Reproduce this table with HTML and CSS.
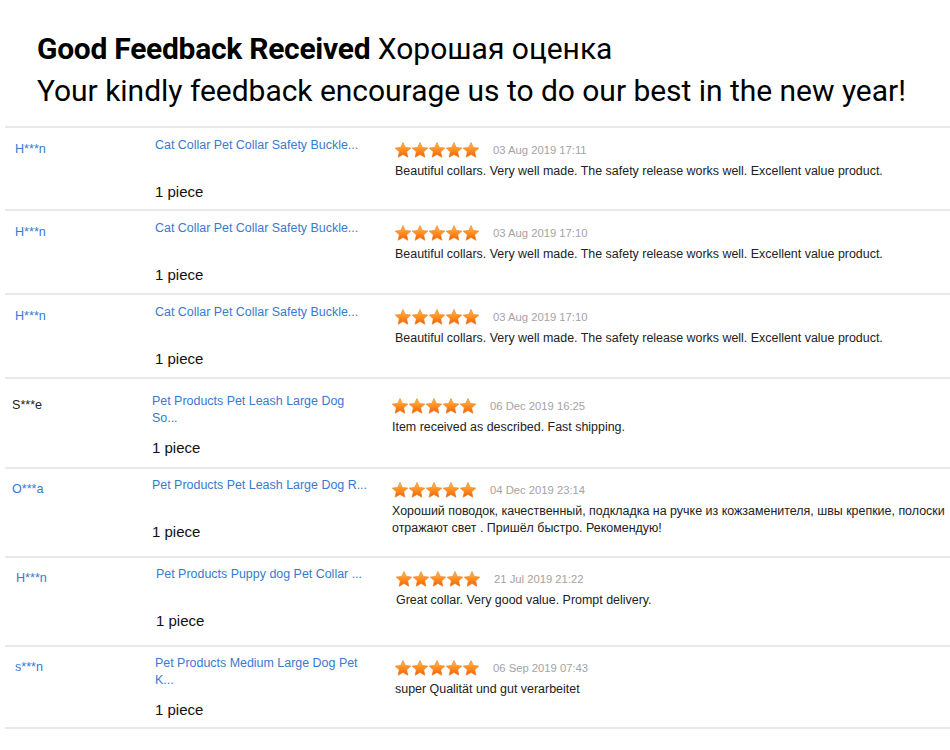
FILE: index.html
```html
<!DOCTYPE html>
<html lang="en">
<head>
<meta charset="utf-8">
<title>Good Feedback Received</title>
<link rel="stylesheet" href="styles.css">
</head>
<body>
<svg class="defs" width="0" height="0" aria-hidden="true">
  <defs>
    <linearGradient id="starFill" x1="0" y1="0" x2="0" y2="1">
      <stop offset="0" stop-color="#ffc04d"/>
      <stop offset="0.55" stop-color="#ff8a1c"/>
      <stop offset="1" stop-color="#ec5f0c"/>
    </linearGradient>
    <symbol id="star" viewBox="0 0 16 16">
      <path d="M8 .5L10.3 5.4L15.8 6.1L11.7 9.8L12.9 15.3L8 12.5L3.1 15.3L4.3 9.8L.2 6.1L5.7 5.4Z" fill="url(#starFill)" stroke="#f07a1e" stroke-width=".6" stroke-linejoin="round"/>
    </symbol>
  </defs>
</svg>

<header class="intro">
  <h1 class="intro__title"><b>Good Feedback Received</b> Хорошая оценка</h1>
  <p class="intro__text">Your kindly feedback encourage us to do our best in the new year!</p>
</header>

<ul class="feedback">
  <li class="fb">
    <div class="fb__buyer">H***n</div>
    <div class="fb__product"><a class="fb__link" href="#">Cat Collar Pet Collar Safety Buckle...</a><span class="fb__qty">1 piece</span></div>
    <div class="fb__review">
      <div class="fb__meta"><svg class="stars" viewBox="0 0 84 16"><use href="#star" x="0" width="16" height="16"/><use href="#star" x="17" width="16" height="16"/><use href="#star" x="34" width="16" height="16"/><use href="#star" x="51" width="16" height="16"/><use href="#star" x="68" width="16" height="16"/></svg><span class="fb__date">03 Aug 2019 17:11</span></div>
      <p class="fb__text">Beautiful collars. Very well made. The safety release works well. Excellent value product.</p>
    </div>
  </li>
  <li class="fb fb--b">
    <div class="fb__buyer">H***n</div>
    <div class="fb__product"><a class="fb__link" href="#">Cat Collar Pet Collar Safety Buckle...</a><span class="fb__qty">1 piece</span></div>
    <div class="fb__review">
      <div class="fb__meta"><svg class="stars" viewBox="0 0 84 16"><use href="#star" x="0" width="16" height="16"/><use href="#star" x="17" width="16" height="16"/><use href="#star" x="34" width="16" height="16"/><use href="#star" x="51" width="16" height="16"/><use href="#star" x="68" width="16" height="16"/></svg><span class="fb__date">03 Aug 2019 17:10</span></div>
      <p class="fb__text">Beautiful collars. Very well made. The safety release works well. Excellent value product.</p>
    </div>
  </li>
  <li class="fb fb--b">
    <div class="fb__buyer">H***n</div>
    <div class="fb__product"><a class="fb__link" href="#">Cat Collar Pet Collar Safety Buckle...</a><span class="fb__qty">1 piece</span></div>
    <div class="fb__review">
      <div class="fb__meta"><svg class="stars" viewBox="0 0 84 16"><use href="#star" x="0" width="16" height="16"/><use href="#star" x="17" width="16" height="16"/><use href="#star" x="34" width="16" height="16"/><use href="#star" x="51" width="16" height="16"/><use href="#star" x="68" width="16" height="16"/></svg><span class="fb__date">03 Aug 2019 17:10</span></div>
      <p class="fb__text">Beautiful collars. Very well made. The safety release works well. Excellent value product.</p>
    </div>
  </li>
  <li class="fb fb--shift fb--top">
    <div class="fb__buyer fb__buyer--plain">S***e</div>
    <div class="fb__product"><a class="fb__link" href="#">Pet Products Pet Leash Large Dog So...</a><span class="fb__qty">1 piece</span></div>
    <div class="fb__review">
      <div class="fb__meta"><svg class="stars" viewBox="0 0 84 16"><use href="#star" x="0" width="16" height="16"/><use href="#star" x="17" width="16" height="16"/><use href="#star" x="34" width="16" height="16"/><use href="#star" x="51" width="16" height="16"/><use href="#star" x="68" width="16" height="16"/></svg><span class="fb__date">06 Dec 2019 16:25</span></div>
      <p class="fb__text">Item received as described. Fast shipping.</p>
    </div>
  </li>
  <li class="fb fb--shift fb--bottom">
    <div class="fb__buyer">O***a</div>
    <div class="fb__product"><a class="fb__link" href="#">Pet Products Pet Leash Large Dog R...</a><span class="fb__qty">1 piece</span></div>
    <div class="fb__review">
      <div class="fb__meta"><svg class="stars" viewBox="0 0 84 16"><use href="#star" x="0" width="16" height="16"/><use href="#star" x="17" width="16" height="16"/><use href="#star" x="34" width="16" height="16"/><use href="#star" x="51" width="16" height="16"/><use href="#star" x="68" width="16" height="16"/></svg><span class="fb__date">04 Dec 2019 23:14</span></div>
      <p class="fb__text">Хороший поводок, качественный, подкладка на ручке из кожзаменителя, швы крепкие, полоски отражают свет . Пришёл быстро. Рекомендую!</p>
    </div>
  </li>
  <li class="fb fb--bottom fb--nudge">
    <div class="fb__buyer">H***n</div>
    <div class="fb__product"><a class="fb__link" href="#">Pet Products Puppy dog Pet Collar ...</a><span class="fb__qty">1 piece</span></div>
    <div class="fb__review">
      <div class="fb__meta"><svg class="stars" viewBox="0 0 84 16"><use href="#star" x="0" width="16" height="16"/><use href="#star" x="17" width="16" height="16"/><use href="#star" x="34" width="16" height="16"/><use href="#star" x="51" width="16" height="16"/><use href="#star" x="68" width="16" height="16"/></svg><span class="fb__date">21 Jul 2019 21:22</span></div>
      <p class="fb__text">Great collar. Very good value. Prompt delivery.</p>
    </div>
  </li>
  <li class="fb fb--last">
    <div class="fb__buyer">s***n</div>
    <div class="fb__product"><a class="fb__link" href="#">Pet Products Medium Large Dog Pet K...</a><span class="fb__qty">1 piece</span></div>
    <div class="fb__review">
      <div class="fb__meta"><svg class="stars" viewBox="0 0 84 16"><use href="#star" x="0" width="16" height="16"/><use href="#star" x="17" width="16" height="16"/><use href="#star" x="34" width="16" height="16"/><use href="#star" x="51" width="16" height="16"/><use href="#star" x="68" width="16" height="16"/></svg><span class="fb__date">06 Sep 2019 07:43</span></div>
      <p class="fb__text">super Qualität und gut verarbeitet</p>
    </div>
  </li>
</ul>
</body>
</html>
```

FILE: styles.css
```css
* { box-sizing: border-box; }

html, body {
  margin: 0;
  padding: 0;
  background: #fff;
}

body {
  font-family: "Liberation Sans", Arial, sans-serif;
  color: #333;
  width: 950px;
}

.defs {
  position: absolute;
  width: 0;
  height: 0;
  overflow: hidden;
}

.intro {
  padding: 28px 0 0 37px;
  font-family: Roboto, "Noto Sans", sans-serif;
  color: #000;
}

.intro__title,
.intro__text {
  margin: 0;
  font-size: 30px;
  line-height: 42px;
  font-weight: 400;
  white-space: nowrap;
}

.intro__title b {
  font-weight: 700;
  letter-spacing: -0.28px;
}

.intro__text {
  letter-spacing: -0.03px;
}

.feedback {
  list-style: none;
  margin: 14px 0 0 5px;
  padding: 0;
}

.fb {
  display: grid;
  grid-template-columns: 140px 240px 1fr;
  align-items: start;
  border-top: 2px solid #e9e9e9;
  padding: 9px 0 9px 10px;
}

.fb--b { padding-bottom: 10px; }

.fb--shift { padding-left: 7px; }

.fb--top { padding-top: 14px; padding-bottom: 11px; }

.fb--bottom { padding-top: 8px; padding-bottom: 16px; }

.fb--nudge { padding-left: 11px; }

.fb--last {
  padding-top: 8px;
  padding-bottom: 9px;
  border-bottom: 2px solid #e9e9e9;
}

.fb__buyer {
  margin-top: 4px;
  font-size: 12.6px;
  line-height: 17px;
  color: #377ad3;
}

.fb__buyer--plain { color: #222; }

.fb__product {
  display: flex;
  flex-direction: column;
  align-items: flex-start;
}

.fb__link {
  display: block;
  max-width: 219px;
  min-height: 34px;
  font-size: 12.45px;
  line-height: 17px;
  color: #377ad3;
  text-decoration: none;
}

.fb__qty {
  margin-top: 12px;
  font-size: 15px;
  line-height: 17px;
  color: #111;
}

.fb__review {
  padding-top: 5px;
}

.fb__meta {
  display: flex;
  align-items: center;
  gap: 14px;
  height: 16px;
}

.stars {
  display: block;
  width: 84px;
  height: 16px;
}

.fb__date {
  font-size: 11.25px;
  color: #a3a3a3;
}

.fb__text {
  margin: 5px 0 0;
  font-size: 12.45px;
  line-height: 17px;
  color: #222;
}
```
